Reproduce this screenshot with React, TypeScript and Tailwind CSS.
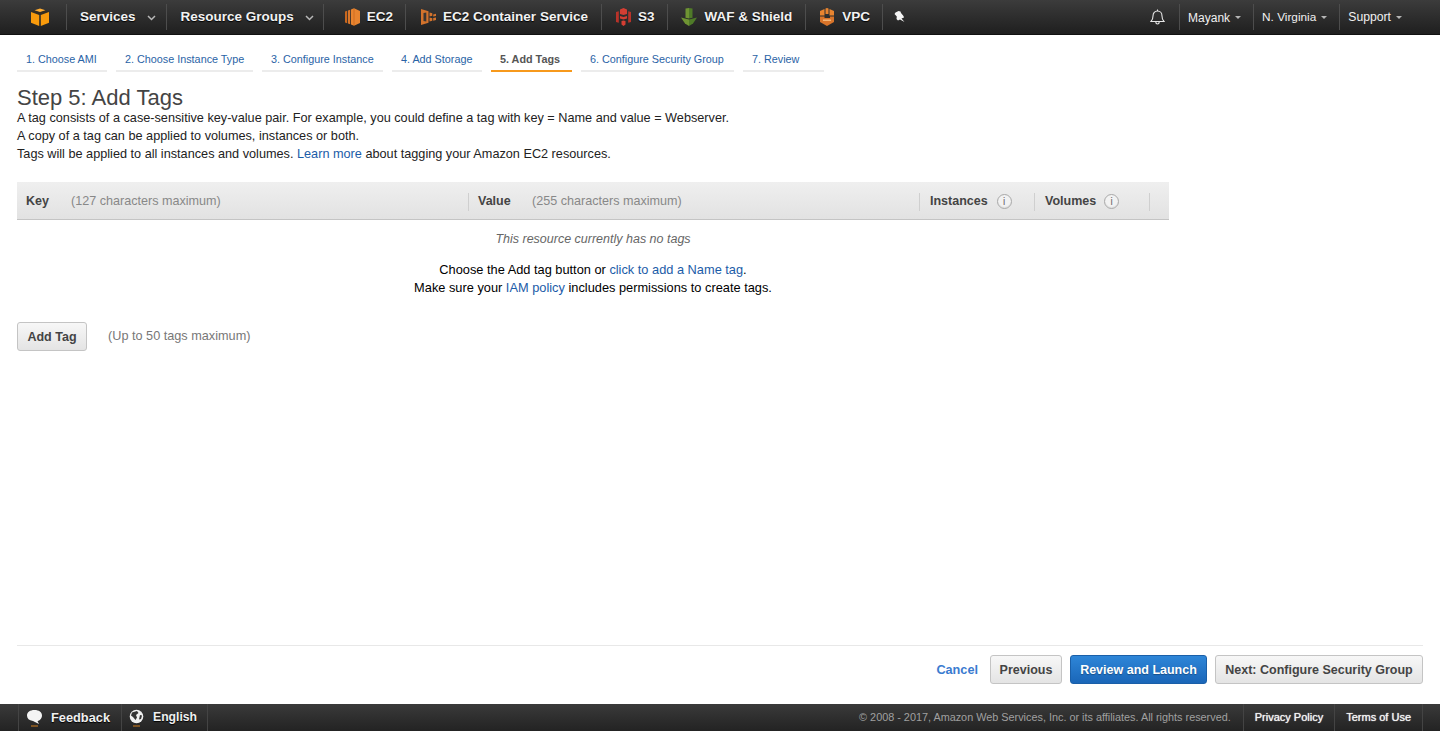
import React from "react";

const F = "font-['Liberation_Sans',Arial,sans-serif]";

function Sep({ className = "" }: { className?: string }) {
  return <div className={`w-px h-[26px] bg-[#4d4d4d] shrink-0 ${className}`} />;
}

function Chevron({ className = "" }: { className?: string }) {
  return (
    <svg width="9" height="6" viewBox="0 0 9 6" className={`shrink-0 mt-[2px] ${className}`}>
      <path d="M1 1l3.500 3.500L8 1" fill="none" stroke="#b8b8b8" strokeWidth="1.500" />
    </svg>
  );
}

function Caret() {
  return <span className="w-0 h-0 border-x-[3px] border-x-transparent border-t-[3px] border-t-[#b5b5b5] ml-[5px]" />;
}

function Cube({ className = "" }: { className?: string }) {
  return (
    <svg width="18" height="18" viewBox="0 0 18 18" className={`shrink-0 ${className}`}>
      <path d="M3.500 2.200L9 .5l5.500 1.700L9 4z" fill="#ffad33" />
      <path d="M0 3.500l3-1 5.900 2 5.800-2 3.300 1-8.300 3v-.1L9 6.500z" fill="#3a2a10" opacity="0.5" />
      <path d="M0 4l8.200 3.100V18L0 14.800z" fill="#f89a0c" />
      <path d="M18 4L9.800 7.100V18L18 14.800z" fill="#f89a0c" />
    </svg>
  );
}

function Ec2Icon() {
  return (
    <svg width="15" height="18" viewBox="0 0 15 18" className="shrink-0">
      <path d="M0 3.500l2.200-.8v12.600L0 14.500z" fill="#c9671e" />
      <path d="M3 2.500l2.200-.8v14.600L3 15.500z" fill="#d8762a" />
      <path d="M6 1.500L9 .3l6 2.700v12l-6 2.700-3-1.200z" fill="#e8842f" />
      <path d="M9 1v16" stroke="#c9671e" strokeWidth="0.800" />
    </svg>
  );
}

function EcsIcon() {
  return (
    <svg width="15" height="18" viewBox="0 0 15 18" className="shrink-0">
      <path d="M0 1l7.500 2.200v11.600L0 17z" fill="#d3732c" />
      <path d="M2.500 5l2.800-.6v9.200L2.500 13z" fill="#3a3632" />
      <path d="M8.500 4.500l2.800.8v2.400l-2.800.8zM8.500 9.500l2.800.8v2.400l-2.800.8zM12.200 6.500l2.800-.8v2.400l-2.800.5zM12.200 10l2.800-.5v2.400l-2.800.8z" fill="#d3732c" />
    </svg>
  );
}

function S3Icon() {
  return (
    <svg width="15" height="18" viewBox="0 0 15 18" className="shrink-0">
      <path d="M0 4l2.800-.8v11.600L0 14zM12.200 3.200L15 4v10l-2.800.8z" fill="#b83229" />
      <path d="M4 1.500L7.500 0 11 1.500V6L7.500 7 4 6zM4 8l3.500 1L11 8v2.500l-3.500 1-3.500-1zM5.500 13l2-.5 2 .5v3.500l-2 1.500-2-1.500z" fill="#d43e33" />
    </svg>
  );
}

function WafIcon() {
  return (
    <svg width="16" height="18" viewBox="0 0 16 18" className="shrink-0">
      <path d="M4.500 0.500L8 0v10.500L4.500 9.800z" fill="#6f9433" />
      <path d="M8 0l3.500.5v9.300L8 10.500z" fill="#4f7a28" />
      <path d="M0 9.500l8 2.100V18L4 15.500z" fill="#6f9433" />
      <path d="M16 9.500l-8 2.100V18l4-2.500z" fill="#4f7a28" />
    </svg>
  );
}

function VpcIcon() {
  return (
    <svg width="16" height="18" viewBox="0 0 16 18" className="shrink-0">
      <path d="M6.500.6L8 0l1.500.6V6h-3zM5.500 1L1 3v4.500h4.500zM10.500 1L15 3v4.500h-4.500z" fill="#e8842f" />
      <path d="M1 8.500h4.500V10H11V8.500h4V14l-7 4-7-4z" fill="#d8742a" />
      <path d="M4 11.500h8V13H4z" fill="#f4b678" />
    </svg>
  );
}

function Pin({ className = "" }: { className?: string }) {
  return (
    <svg width="11" height="12" viewBox="0 0 11 12" className={`shrink-0 ${className}`}>
      <path d="M4.500 0L6.500.5 7 2l2.500 3 .5 1.500-2.500 1L10.500 11 6 8.500 4 9.500 2.500 8l.3-2.500L.5 3l1-1.500z" fill="#f4f4f4" />
    </svg>
  );
}

function Bell({ className = "" }: { className?: string }) {
  return (
    <svg width="15" height="16" viewBox="0 0 15 16" fill="none" stroke="#e6e6e6" strokeWidth="1.100" className={`shrink-0 ${className}`}>
      <path d="M1 12.500c1.500-1.500 2-3 2-5.500 0-2.800 1.800-5 4.500-5S12 4.200 12 7c0 2.500.5 4 2 5.500z" />
      <path d="M5.800 13c0 1.300.8 2 1.700 2s1.700-.7 1.700-2" />
      <path d="M7.500 .5V2" />
    </svg>
  );
}

function Info() {
  return (
    <span className="w-[15px] h-[15px] rounded-full border border-[#a8a8a8] bg-[#f2f2f2] flex items-center justify-center text-[10px] leading-none text-[#666] shadow-[inset_0_-1px_1px_rgba(0,0,0,0.08)]">
      i
    </span>
  );
}

function FeedbackIcon() {
  return (
    <svg width="17" height="18" viewBox="0 0 17 18" className="shrink-0">
      <path d="M8.500 1C13 1 16 3.200 16 6.500S13 12 11.500 12L13 15 7 12C3 11.500 1 9.500 1 6.500 1 3.200 4 1 8.500 1z" fill="#f4f4f4" />
      <path d="M5 17h7" stroke="#d27f1e" strokeWidth="1" />
    </svg>
  );
}

function GlobeIcon() {
  return (
    <svg width="17" height="18" viewBox="0 0 17 18" className="shrink-0">
      <circle cx="8.500" cy="7.500" r="6.800" fill="#f0f0f0" />
      <path d="M4 3.500l5-1.500 1.500 2L8 6l1 2.500-1.500 2.500L5 8 3 6.500z" fill="#333" />
      <path d="M12 6l2 .5-1 3.500-2 .5z" fill="#333" />
      <path d="M5 17h7" stroke="#d27f1e" strokeWidth="1" />
    </svg>
  );
}

const navText = "text-[13.500px] font-bold text-[#f2f2f2] [text-shadow:0_1px_1px_#000] whitespace-nowrap mt-px";
const userText = "flex items-center text-[#f0f0f0] whitespace-nowrap mt-px";

function ServiceLink({ icon, label, className = "" }: { icon: React.ReactNode; label: string; className?: string }) {
  return (
    <div className={`flex items-center gap-[7px] ${className}`}>
      {icon}
      <span className={navText}>{label}</span>
    </div>
  );
}

const steps = [
  { label: "1. Choose AMI", w: "w-[90px]" },
  { label: "2. Choose Instance Type", w: "w-[137px]" },
  { label: "3. Configure Instance", w: "w-[121px]" },
  { label: "4. Add Storage", w: "w-[90px]" },
  { label: "5. Add Tags", w: "w-[81px]", active: true },
  { label: "6. Configure Security Group", w: "w-[153px]" },
  { label: "7. Review", w: "w-[81px]" },
];

function TopNav() {
  return (
    <header className="h-[35px] shrink-0 bg-gradient-to-b from-[#3c3c3c] to-[#1f1f1f] border-b border-[#111] flex items-center pl-[31px] pr-[38px]">
      <Cube />
      <Sep className="ml-[17px]" />
      <span className={`${navText} ml-[13px]`}>Services</span>
      <Chevron className="ml-[11px]" />
      <Sep className="ml-[10px]" />
      <span className={`${navText} ml-[14px]`}>Resource Groups</span>
      <Chevron className="ml-[11px]" />
      <Sep className="ml-[9px]" />
      <ServiceLink className="ml-[21px]" icon={<Ec2Icon />} label="EC2" />
      <Sep className="ml-[12px]" />
      <ServiceLink className="ml-[15px]" icon={<EcsIcon />} label="EC2 Container Service" />
      <Sep className="ml-[13px]" />
      <ServiceLink className="ml-[14px]" icon={<S3Icon />} label="S3" />
      <Sep className="ml-[13px]" />
      <ServiceLink className="ml-[13px]" icon={<WafIcon />} label="WAF & Shield" />
      <Sep className="ml-[13px]" />
      <ServiceLink className="ml-[13px]" icon={<VpcIcon />} label="VPC" />
      <Sep className="ml-[12px]" />
      <Pin className="ml-[11px]" />
      <Bell className="ml-auto" />
      <Sep className="ml-[14px]" />
      <span className={`${userText} ml-[8px] text-[12px]`}>Mayank<Caret /></span>
      <Sep className="ml-[12px]" />
      <span className={`${userText} ml-[8px] text-[11.800px]`}>N. Virginia<Caret /></span>
      <Sep className="ml-[12px]" />
      <span className={`${userText} ml-[8px] text-[12.200px]`}>Support<Caret /></span>
    </header>
  );
}

function Wizard() {
  return (
    <nav className="flex gap-[9px] mt-[12px] h-[25px]">
      {steps.map((s) => (
        <span
          key={s.label}
          className={`${s.w} h-[25px] pl-[9px] text-[10.800px] leading-[25px] whitespace-nowrap border-b-[2px] ${
            s.active ? "border-[#f7991c] text-[#555] font-bold" : "border-[#ececec] text-[#2a63a6]"
          }`}
        >
          {s.label}
        </span>
      ))}
    </nav>
  );
}

function TagTable() {
  return (
    <div className="mt-[19px] w-[1152px]">
      <div className="h-[38px] pt-[2px] bg-gradient-to-b from-[#efefef] to-[#e2e2e2] border-b border-[#c4c4c4] flex items-center text-[12.500px]">
        <div className="w-[451px] flex items-center pl-[9px] h-[16px]">
          <b className="text-[#444] w-[45px]">Key</b>
          <span className="text-[#888] text-[12.600px]">(127 characters maximum)</span>
        </div>
        <div className="w-[451px] flex items-center pl-[9px] h-[18px] border-l border-[#cfcfcf]">
          <b className="text-[#444] w-[54px]">Value</b>
          <span className="text-[#888] text-[12.600px]">(255 characters maximum)</span>
        </div>
        <div className="w-[115px] flex items-center gap-[9px] pl-[10px] h-[18px] border-l border-[#cfcfcf]">
          <b className="text-[#444]">Instances</b>
          <Info />
        </div>
        <div className="w-[116px] flex items-center gap-[8px] pl-[10px] h-[18px] border-x border-[#cfcfcf]">
          <b className="text-[#444]">Volumes</b>
          <Info />
        </div>
      </div>
      <p className="text-center text-[12.500px] italic text-[#666] mt-[11px] leading-[16px]">This resource currently has no tags</p>
      <div className="text-center text-[12.800px] text-black mt-[14px] leading-[18px]">
        <p>
          Choose the Add tag button or <a className="text-[#1b5ca8]">click to add a Name tag</a>.
        </p>
        <p>
          Make sure your <a className="text-[#1b5ca8]">IAM policy</a> includes permissions to create tags.
        </p>
      </div>
    </div>
  );
}

function Button({ children, primary, className = "" }: { children: React.ReactNode; primary?: boolean; className?: string }) {
  return (
    <button
      className={`h-[29px] pt-px rounded-[3px] border text-[12.500px] font-bold whitespace-nowrap ${
        primary
          ? "bg-gradient-to-b from-[#2e86d8] to-[#1a66b8] border-[#1a5fa8] text-white [text-shadow:0_1px_1px_rgba(0,0,0,0.3)]"
          : "bg-gradient-to-b from-[#f7f7f7] to-[#e4e4e4] border-[#c4c4c4] text-[#444]"
      } ${className}`}
    >
      {children}
    </button>
  );
}

function Footer() {
  return (
    <footer className="h-[27px] mb-px shrink-0 bg-gradient-to-b from-[#3a3a3a] to-[#232323] flex items-center pl-[18px] pr-[17px]">
      <span className="w-px h-full bg-[#444]" />
      <span className="w-[102px] flex items-center pl-[7px] gap-[8px] h-full">
        <FeedbackIcon />
        <b className="text-[12.800px] text-[#f0f0f0] [text-shadow:0_1px_1px_#000]">Feedback</b>
      </span>
      <span className="w-px h-full bg-[#444]" />
      <span className="w-[85px] flex items-center pl-[6px] gap-[8px] h-full">
        <GlobeIcon />
        <b className="text-[12.200px] text-[#f0f0f0] [text-shadow:0_1px_1px_#000]">English</b>
      </span>
      <span className="w-px h-full bg-[#444]" />
      <span className="ml-auto text-[10.850px] text-[#a0a0a0] whitespace-nowrap">© 2008 - 2017, Amazon Web Services, Inc. or its affiliates. All rights reserved.</span>
      <span className="ml-[12px] w-px h-full bg-[#444]" />
      <span className="px-[11px] text-[11px] text-[#f4f4f4] [text-shadow:0_0_1px_#fff] whitespace-nowrap">Privacy Policy</span>
      <span className="w-px h-full bg-[#444]" />
      <span className="px-[11px] text-[11px] text-[#f4f4f4] [text-shadow:0_0_1px_#fff] whitespace-nowrap">Terms of Use</span>
      <span className="w-px h-full bg-[#444]" />
    </footer>
  );
}

export default function App() {
  return (
    <div className={`${F} h-[732px] w-[1440px] flex flex-col overflow-hidden bg-white`}>
      <TopNav />
      <main className="pl-[17px] pr-[17px] flex-1 flex flex-col">
        <Wizard />
        <h1 className="text-[22px] leading-[24px] text-[#444] mt-[14px]">Step 5: Add Tags</h1>
        <div className="text-[12.700px] leading-[18px] text-[#222] -mt-px">
          <p>A tag consists of a case-sensitive key-value pair. For example, you could define a tag with key = Name and value = Webserver.</p>
          <p>A copy of a tag can be applied to volumes, instances or both.</p>
          <p>
            Tags will be applied to all instances and volumes. <a className="text-[#1b5ca8]">Learn more</a> about tagging your Amazon EC2 resources.
          </p>
        </div>
        <TagTable />
        <div className="flex items-center mt-[25px] gap-[21px]">
          <Button className="w-[70px]">Add Tag</Button>
          <span className="text-[12.700px] text-[#777]">(Up to 50 tags maximum)</span>
        </div>
        <div className="mt-auto border-t border-[#e8e8e8] h-[59px] pt-[9px] flex items-start justify-end gap-[8px]">
          <a className="text-[12.700px] font-bold text-[#3a7bd0] mr-[4px] mt-[6px]">Cancel</a>
          <Button className="w-[72px]">Previous</Button>
          <Button primary className="w-[137px]">Review and Launch</Button>
          <Button className="w-[208px]">Next: Configure Security Group</Button>
        </div>
      </main>
      <Footer />
    </div>
  );
}
